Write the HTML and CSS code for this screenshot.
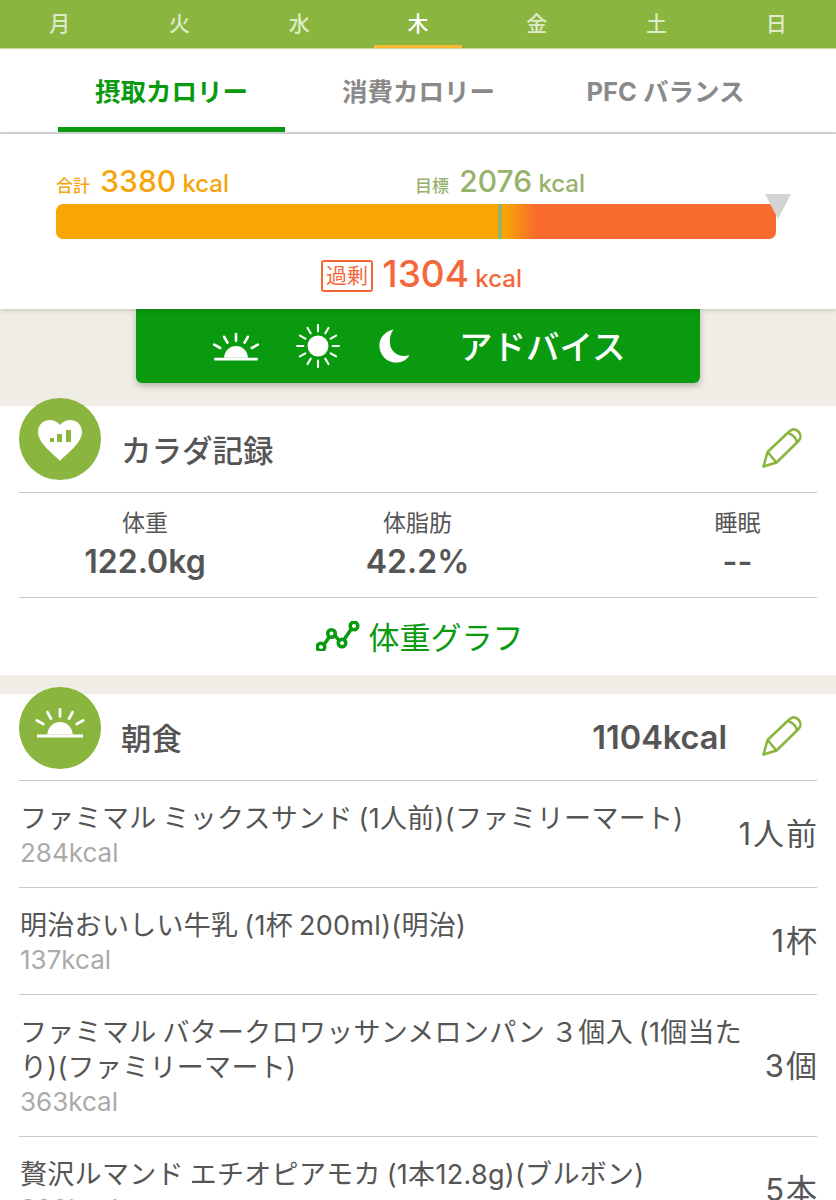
FILE: index.html
```html
<!DOCTYPE html>
<html lang="ja">
<head>
  <meta charset="UTF-8" />
  <title>カロリー記録</title>
  <link rel="stylesheet" href="styles.css">
</head>
<body>
  <nav class="week">
    <span class="day">月</span>
    <span class="day">火</span>
    <span class="day">水</span>
    <span class="day current">木</span>
    <span class="day">金</span>
    <span class="day">土</span>
    <span class="day">日</span>
  </nav>

  <nav class="tabs">
    <a class="tab active">摂取カロリー</a>
    <a class="tab">消費カロリー</a>
    <a class="tab">PFC バランス</a>
  </nav>

  <section class="summary">
    <div class="totals">
      <div class="total"><small>合計</small> <b>3380</b> <span>kcal</span></div>
      <div class="goal"><small>目標</small> <b>2076</b> <span>kcal</span></div>
    </div>
    <div class="bar">
      <div class="bar-goal"></div>
      <div class="bar-marker"></div>
    </div>
    <div class="excess">
      <small class="excess-tag">過剰</small> <b>1304</b> <span>kcal</span>
    </div>
  </section>

  <div class="advice-wrap">
    <button class="advice">
      <svg class="advice-icon icon-sunrise" viewBox="0 -4 44 44"><use href="#sunrise" /></svg>
      <svg class="advice-icon icon-sun" viewBox="0 0 44 44"><use href="#sun" /></svg>
      <svg class="advice-icon icon-moon" viewBox="0 0 44 44"><use href="#moon" /></svg>
      <span class="advice-label">アドバイス</span>
    </button>
  </div>

  <section class="card">
    <header class="card-head">
      <div class="badge">
        <svg viewBox="0 0 82 82" width="82" height="82">
          <path d="M41 63 C36 57 19 46 19 34 C19 26 25 22 31 22 C35 22 39 24 41 27 C43 24 47 22 51 22 C57 22 63 26 63 34 C63 46 46 57 41 63 Z" fill="#fff" />
          <rect x="31" y="40" width="4" height="4" fill="#8ab53f" />
          <rect x="38" y="36" width="5" height="8" fill="#8ab53f" />
          <rect x="47" y="32" width="5" height="12" fill="#8ab53f" />
        </svg>
      </div>
      <h2 class="card-title">カラダ記録</h2>
      <svg class="edit" viewBox="0 0 42 42"><use href="#pencil" /></svg>
    </header>
    <div class="stats">
      <div class="stat stat-weight"><div class="stat-name">体重</div><div class="stat-value">122.0kg</div></div>
      <div class="stat stat-fat"><div class="stat-name">体脂肪</div><div class="stat-value">42.2%</div></div>
      <div class="stat stat-sleep"><div class="stat-name">睡眠</div><div class="stat-value">--</div></div>
    </div>
    <a class="graph-link">
      <svg class="graph-icon" viewBox="0 0 44 30" fill="none" stroke="#0a9a10" stroke-width="3.500">
        <path d="M7 25 L14 15 M18 13 L24 21 M27 20 L36 7" />
        <circle cx="5" cy="26" r="3.800" />
        <circle cx="15.500" cy="12.500" r="3.800" />
        <circle cx="26" cy="22" r="3.800" />
        <circle cx="38" cy="5" r="3.800" />
      </svg>
      体重グラフ
    </a>
  </section>

  <section class="card meal">
    <header class="card-head">
      <div class="badge">
        <svg viewBox="-7.300 -7 58.600 58.600" width="82" height="82"><use href="#sunrise" /></svg>
      </div>
      <h2 class="card-title">朝食</h2>
      <div class="meal-kcal">1104kcal</div>
      <svg class="edit" viewBox="0 0 42 42"><use href="#pencil" /></svg>
    </header>
    <ul class="foods">
      <li class="food">
        <div class="food-info"><div class="food-name">ファミマル ミックスサンド (1人前)(ファミリーマート)</div><div class="food-kcal">284kcal</div></div>
        <div class="food-qty">1人前</div>
      </li>
      <li class="food">
        <div class="food-info"><div class="food-name">明治おいしい牛乳 (1杯 200ml)(明治)</div><div class="food-kcal">137kcal</div></div>
        <div class="food-qty">1杯</div>
      </li>
      <li class="food">
        <div class="food-info"><div class="food-name">ファミマル バタークロワッサンメロンパン ３個入 (1個当たり)(ファミリーマート)</div><div class="food-kcal">363kcal</div></div>
        <div class="food-qty">3個</div>
      </li>
      <li class="food">
        <div class="food-info"><div class="food-name">贅沢ルマンド エチオピアモカ (1本12.8g)(ブルボン)</div><div class="food-kcal">320kcal</div></div>
        <div class="food-qty">5本</div>
      </li>
    </ul>
  </section>

  <!-- shared icons -->
  <svg class="defs" width="0" height="0">
    <defs>
      <g id="sunrise" fill="#fff" stroke="#fff">
        <path d="M13 27 A9 9 0 0 1 31 27 Z" stroke="none" />
        <path d="M5.500 28 H38.500" stroke-width="2" fill="none" />
        <path d="M22 9 V14 M13 11 L15.500 15.500 M31 11 L28.500 15.500 M5.500 17 L10 19.500 M38.500 17 L34 19.500" stroke-width="2" stroke-linecap="round" fill="none" />
      </g>
      <g id="sun" fill="#fff" stroke="#fff">
        <circle cx="22" cy="22" r="10" stroke="none" />
        <path d="M22 2 V8 M22 36 V42 M2 22 H8 M36 22 H42 M12 4.700 L15 9.900 M32 4.700 L29 9.900 M12 39.300 L15 34.100 M32 39.300 L29 34.100 M4.700 12 L9.900 15 M39.300 12 L34.100 15 M4.700 32 L9.900 29 M39.300 32 L34.100 29" stroke-width="2" stroke-linecap="round" fill="none" />
      </g>
      <g id="moon">
        <path d="M21 6 C12 8 7 15 8 23 C9 32 17 38 25 37 C30 36.500 34 34 36 30 C27 33 20 28 18 21 C17 15 18 10 21 6 Z" fill="#fff" />
      </g>
      <g id="pencil" fill="none" stroke="#8ab53f" stroke-width="2.600" stroke-linejoin="round">
        <path d="M2.500 38.500 L6.500 24 L29 2.800 C32 0.800 35.500 1.500 37.800 4 C40 6.500 40 10 38 12.500 L15.500 34.500 Z" />
        <path d="M6.500 24 L15.500 34.500 M27 5 C31 6 35.500 10 36 14.500" />
      </g>
    </defs>
  </svg>
</body>
</html>
```

FILE: styles.css
```css
* {
  box-sizing: border-box;
}
html, body {
  margin: 0;
  height: 1200px;
  overflow: hidden;
}
body {
  font-family: Inter, "Noto Sans CJK JP", sans-serif;
  background: #f0ede6;
  color: #555;
}
.defs {
  position: absolute;
}

/* week strip */
.week {
  display: flex;
  height: 49px;
  background: #8ab53f;
  border-bottom: 1px solid #c5d99e;
}
.day {
  flex: 1;
  text-align: center;
  font-size: 21px;
  line-height: 48px;
  font-weight: 500;
  color: #dfeac9;
}
.day.current {
  color: #fff;
  flex: none;
  width: 88px;
  margin: 0 15px;
  height: 48px;
  border-bottom: 3px solid #fbb92f;
  line-height: 48px;
}

/* tabs */
.tabs {
  display: flex;
  height: 85px;
  padding-left: 58px;
  background: #fff;
  border-bottom: 2px solid #d8d8d8;
}
.tab {
  flex: none;
  width: 227px;
  margin-right: 20px;
  padding-top: 1px;
  text-align: center;
  font-size: 25.500px;
  font-weight: 700;
  line-height: 84px;
  color: #8a8a8a;
  white-space: nowrap;
}
.tab.active {
  color: #0a9a10;
  height: 83px;
  border-bottom: 5px solid #0a9a10;
}

/* calorie summary */
.summary {
  position: relative;
  z-index: 2;
  height: 175px;
  padding: 29px 60px 0 56px;
  background: #fff;
  box-shadow: 0 1px 5px rgba(0, 0, 0, 0.2);
}
.totals {
  display: flex;
  height: 41px;
  font-weight: 500;
  white-space: nowrap;
}
.totals small {
  font-size: 17px;
  margin-right: 6px;
}
.totals b {
  font-size: 30px;
  font-weight: 500;
  margin-right: 2px;
}
.totals span {
  font-size: 24px;
}
.total {
  width: 359px;
  color: #f5a50b;
}
.goal {
  color: #96b26d;
}
.bar {
  position: relative;
  height: 35px;
  border-radius: 7px;
  background: linear-gradient(to right, #f9a605 0, #f9a605 62.300%, #f96a2f 66.700%);
}
.bar-goal {
  position: absolute;
  left: 442px;
  top: 0;
  bottom: 0;
  width: 4px;
  background: #96b26d;
}
.bar-marker {
  position: absolute;
  right: -15px;
  top: -10px;
  border-style: solid;
  border-width: 25px 13px 0;
  border-color: #d4d4d4 transparent transparent;
}
.excess {
  margin-top: 12px;
  padding-left: 11px;
  text-align: center;
  color: #f4673a;
  font-weight: 500;
  white-space: nowrap;
}
.excess-tag {
  display: inline-block;
  margin-right: 5px;
  padding: 0 3px;
  font-size: 21px;
  line-height: 28px;
  font-weight: 400;
  border: 2px solid #f4673a;
  border-radius: 3px;
  vertical-align: 4px;
}
.excess b {
  font-size: 37px;
  font-weight: 500;
  margin-right: 2px;
}
.excess span {
  font-size: 24px;
}

/* advice button */
.advice-wrap {
  height: 97px;
  padding: 0 136px;
}
.advice {
  display: flex;
  align-items: center;
  width: 564px;
  height: 74px;
  padding: 0 0 0 71px;
  border: 0;
  border-radius: 0 0 6px 6px;
  background: #0a9a10;
  box-shadow: 0 3px 6px rgba(0, 0, 0, 0.25);
  font-family: inherit;
}
.advice-icon {
  flex: none;
  margin-right: 30px;
}
.icon-sunrise {
  width: 58px;
  height: 58px;
}
.icon-sun {
  width: 46px;
  height: 46px;
}
.icon-moon {
  width: 47px;
  height: 47px;
}
.advice-label {
  margin-left: 11px;
  padding-bottom: 4px;
  color: #fff;
  font-size: 33.500px;
  font-weight: 500;
}

/* cards */
.card {
  background: #fff;
  padding: 0 19px;
}
.meal {
  margin-top: 19px;
}
.card-head {
  display: flex;
  align-items: center;
  height: 87px;
  border-bottom: 1px solid #c8c8c8;
}
.badge {
  width: 82px;
  height: 82px;
  margin-top: -21px;
  border-radius: 50%;
  background: #8ab53f;
  flex: none;
}
.meal .badge {
  margin-top: -19px;
}
.badge svg {
  display: block;
}
.card-title {
  margin: 0 0 0 20px;
  font-size: 30.500px;
  font-weight: 500;
  color: #555;
}
.edit {
  width: 42px;
  height: 42px;
  margin-left: auto;
  margin-right: 14px;
}
.meal-kcal {
  margin-left: auto;
  font-size: 32.500px;
  font-weight: 600;
  color: #555;
}
.meal-kcal + .edit {
  margin-left: 34px;
}
.stats {
  display: flex;
  height: 105px;
  padding-top: 14px;
  border-bottom: 1px solid #c8c8c8;
}
.stat {
  text-align: center;
}
.stat-weight {
  width: 252px;
}
.stat-fat {
  width: 293px;
}
.stat-sleep {
  flex: 1;
  padding-left: 94px;
}
.stat-name {
  font-size: 23px;
  line-height: 32px;
}
.stat-value {
  font-size: 32px;
  font-weight: 600;
  line-height: 45px;
}
.graph-link {
  display: flex;
  align-items: center;
  justify-content: center;
  height: 77px;
  padding-bottom: 2px;
  padding-left: 3px;
  font-size: 31px;
  color: #0a9a10;
}
.graph-icon {
  width: 44px;
  height: 30px;
  margin-right: 9px;
}

/* food list */
.foods {
  list-style: none;
  margin: 0;
  padding: 0;
}
.food {
  display: flex;
  align-items: center;
  justify-content: space-between;
  padding: 20px 0 17px 1px;
  border-bottom: 1px solid #c8c8c8;
}
.food-info {
  width: 724px;
}
.food-name {
  font-size: 27px;
  line-height: 35px;
  letter-spacing: 0.300px;
  word-spacing: -2px;
  color: #555;
}
.food-kcal {
  font-size: 26px;
  line-height: 34px;
  color: #aaa;
}
.food-qty {
  margin-right: -2px;
  padding-bottom: 8px;
  font-size: 31px;
  letter-spacing: 2px;
  color: #555;
  white-space: nowrap;
}
```
